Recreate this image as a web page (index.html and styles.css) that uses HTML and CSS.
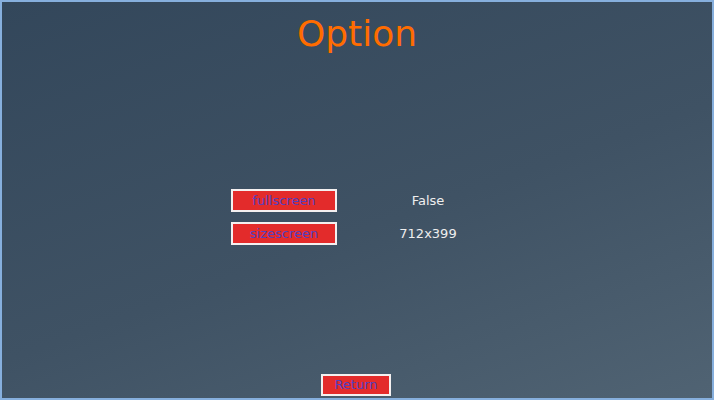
FILE: index.html
```html
<!DOCTYPE html>
<html>
<head>
<meta charset="utf-8">
<link rel="stylesheet" href="styles.css">
</head>
<body>
<div class="screen">
  <h1 class="title">Option</h1>
  <div class="options">
    <div class="btn">fullscreen</div>
    <div class="value">False</div>
    <div class="btn">sizescreen</div>
    <div class="value">712x399</div>
  </div>
  <div class="footer">
    <div class="btn btn-return">Return</div>
  </div>
</div>
</body>
</html>
```
FILE: styles.css
```css
html, body {
  margin: 0;
  padding: 0;
}
body {
  width: 714px;
  height: 400px;
  overflow: hidden;
  font-family: "DejaVu Sans", sans-serif;
}
.screen {
  box-sizing: border-box;
  width: 714px;
  height: 400px;
  border: 2px solid #86afdd;
  background: linear-gradient(160deg, #33475b 0%, #3f5264 55%, #506373 100%);
  display: flex;
  flex-direction: column;
}
.title {
  margin: 0;
  padding-top: 12px;
  font-weight: normal;
  font-size: 36px;
  line-height: 40px;
  color: #ff6c00;
  text-align: center;
}
.options {
  margin-top: 135px;
  margin-left: 229px;
  display: grid;
  grid-template-columns: 106px 100px;
  column-gap: 41px;
  row-gap: 10px;
  align-items: center;
}
.btn {
  box-sizing: border-box;
  height: 23px;
  border: 2px solid #f4f0f0;
  background: #e32b2b;
  color: #5240c0;
  font-size: 13px;
  line-height: 19px;
  text-align: center;
}
.value {
  color: #eeeeee;
  font-size: 13px;
  text-align: center;
}
.footer {
  margin-top: auto;
  margin-bottom: 2px;
  display: flex;
  justify-content: center;
  padding-right: 2px;
}
.btn-return {
  width: 70px;
  height: 22px;
  line-height: 18px;
}
```
